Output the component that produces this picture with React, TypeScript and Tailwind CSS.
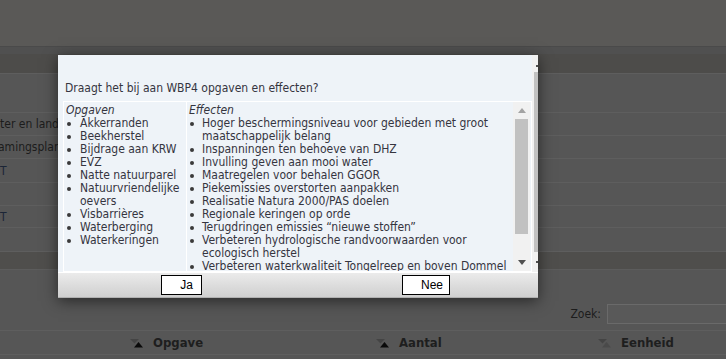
import React from 'react';

const opgaven = [
  ['Akkerranden'],
  ['Beekherstel'],
  ['Bijdrage aan KRW'],
  ['EVZ'],
  ['Natte natuurparel'],
  ['Natuurvriendelijke', 'oevers'],
  ['Visbarrières'],
  ['Waterberging'],
  ['Waterkeringen'],
];

const effecten = [
  ['Hoger beschermingsniveau voor gebieden met groot', 'maatschappelijk belang'],
  ['Inspanningen ten behoeve van DHZ'],
  ['Invulling geven aan mooi water'],
  ['Maatregelen voor behalen GGOR'],
  ['Piekemissies overstorten aanpakken'],
  ['Realisatie Natura 2000/PAS doelen'],
  ['Regionale keringen op orde'],
  ['Terugdringen emissies \u201cnieuwe stoffen\u201d'],
  ['Verbeteren hydrologische randvoorwaarden voor', 'ecologisch herstel'],
  ['Verbeteren waterkwaliteit Tongelreep en boven Dommel'],
];

const SortIcon = ({ active }: { active: boolean }) => (
  <svg width="14" height="10" viewBox="0 0 14 10" className="shrink-0">
    <path d="M0 1h9L4.5 5.5z" fill="#444" />
    <path d="M4 9.5h9L8.5 4z" fill={active ? '#0a0a0a' : '#4a4a4a'} />
  </svg>
);

const BulletList = ({ title, items, textOffset }: { title: string; items: string[][]; textOffset: string }) => (
  <div className="pt-[2px] pl-[2px]">
    <div className="italic h-[13px]">{title}</div>
    <ul>
      {items.map((lines, i) => (
        <li key={i} className="flex">
          <span className={`${textOffset} h-[13px] shrink-0 flex items-center pl-[1px]`}>
            <span className="w-[4px] h-[4px] rounded-full bg-[#3a3a3a]" />
          </span>
          <span className="whitespace-nowrap">
            {lines.map((l, j) => (
              <div key={j} className="h-[13px]">{l}</div>
            ))}
          </span>
        </li>
      ))}
    </ul>
  </div>
);

const Row = ({ h, children }: { h: string; children?: React.ReactNode }) => (
  <div className={`${h} border-t border-[#5e5e5e] flex items-center`}>{children}</div>
);

export default function App() {
  return (
    <div className="relative w-[726px] h-[359px] overflow-hidden bg-[#565656] font-['DejaVu_Sans_Condensed','DejaVu_Sans',sans-serif] text-[12px] text-[#1c1c1c]">
      {/* page behind the overlay */}
      <div className="h-[47px] bg-[#5a5957] border-b border-[#4a4a4a]" />
      <div className="h-[7px] bg-[#505050]" />
      <div className="h-[19px] bg-[#4d4c4a]" />
      <Row h="h-[39px]" />
      <Row h="h-[23px]">
        <span className="whitespace-nowrap">ter en landschap</span>
      </Row>
      <Row h="h-[23px]">
        <span className="whitespace-nowrap -ml-[2px]">amingsplan</span>
      </Row>
      <Row h="h-[24px]">
        <span className="text-[#1b2536]">T</span>
      </Row>
      <Row h="h-[23px]" />
      <Row h="h-[22px]">
        <span className="text-[#1b2536]">T</span>
      </Row>
      <Row h="h-[24px]" />
      <div className="h-[18px] bg-[#4f4e4c] border-t border-[#5e5e5e]" />
      <div className="h-[28px] border-t border-[#5c5c5c]" />
      <div className="h-[33px] flex items-center justify-end gap-[6px]">
        <span>Zoek:</span>
        <div className="w-[120px] h-[20px] border border-[#6a6a6a] bg-[#595959] -mr-[1px]" />
      </div>
      <div className="h-[25px] border-t border-b border-[#5e5e5e] flex items-center font-bold text-[13px] text-[#1e1e1e]">
        <div className="w-[130px]" />
        <div className="w-[246px] flex items-center gap-[9px]">
          <SortIcon active />
          <span>Opgave</span>
        </div>
        <div className="w-[222px] flex items-center gap-[9px]">
          <SortIcon active />
          <span>Aantal</span>
        </div>
        <div className="flex items-center gap-[9px]">
          <SortIcon active={false} />
          <span>Eenheid</span>
        </div>
      </div>

      {/* dialog */}
      <div className="absolute left-[58px] top-[55px] w-[480px] h-[243px] bg-[#eef3f8] shadow-[0_3px_14px_rgba(0,0,0,0.55)] flex flex-col text-[#35353f]">
        <div className="flex h-[217px]">
          <div className="w-[474px] flex flex-col">
            <div className="h-[46px] pl-[7px] pt-[27px] leading-[13px]">
              Draagt het bij aan WBP4 opgaven en effecten?
            </div>
            <div className="ml-[5px] h-[171px] border border-white flex leading-[13px]">
              <div className="w-[123px] border-r border-white">
                <BulletList title="Opgaven" items={opgaven} textOffset="w-[14px]" />
              </div>
              <div className="w-[326px] overflow-hidden">
                <BulletList title="Effecten" items={effecten} textOffset="w-[13px]" />
              </div>
              <div className="w-[17px] bg-[#f1f1f1] flex flex-col items-center">
                <div className="h-[17px] flex items-center justify-center">
                  <svg width="8" height="5" viewBox="0 0 8 5"><path d="M0 5h8L4 0z" fill="#a3a3a3" /></svg>
                </div>
                <div className="w-[13px] h-[115px] bg-[#c1c1c1]" />
                <div className="flex-1" />
                <div className="h-[17px] flex items-center justify-center">
                  <svg width="8" height="5" viewBox="0 0 8 5"><path d="M0 0h8L4 5z" fill="#505050" /></svg>
                </div>
              </div>
            </div>
          </div>
          <div className="w-[6px] bg-[#f1f1f1] flex flex-col">
            <div className="h-[17px] flex items-center justify-end">
              <span className="w-[2px] h-[2px] bg-[#505050] mt-[5px]" />
            </div>
            <div className="ml-[2px] h-[180px] bg-[#c1c1c1]" />
            <div className="flex-1 flex items-center justify-end">
              <span className="w-[2px] h-[2px] bg-[#505050]" />
            </div>
          </div>
        </div>
        <div className="flex-1 border-t border-white bg-gradient-to-b from-[#ebebeb] to-[#cfcfcf] border-b border-b-[#b0b0b0] flex items-center font-['Liberation_Sans',sans-serif] text-black text-[12px]">
          <button className="ml-[103px] w-[41px] h-[20px] bg-white border border-black text-right pr-[8px] leading-[18px]">Ja</button>
          <button className="ml-[200px] w-[48px] h-[20px] bg-white border border-black text-right pr-[6px] leading-[18px]">Nee</button>
        </div>
      </div>
    </div>
  );
}
